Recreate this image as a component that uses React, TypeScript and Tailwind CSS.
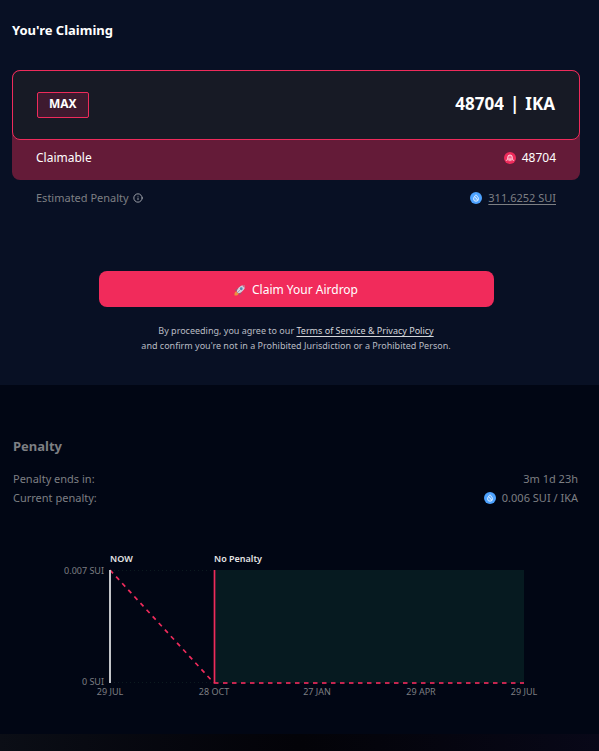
import { useState } from 'react'
import { Info } from 'lucide-react'

const CLAIMABLE = 48704

const TICKS = [
  { x: 110, label: '29 JUL' },
  { x: 214, label: '28 OCT' },
  { x: 317, label: '27 JAN' },
  { x: 421, label: '29 APR' },
  { x: 524, label: '29 JUL' },
]

function SuiIcon() {
  return (
    <svg viewBox="0 0 24 24" className="h-3 w-3 shrink-0" aria-hidden="true">
      <circle cx="12" cy="12" r="12" fill="#4da2ff" />
      <path
        d="M12 5.500c-2 2.500-5 5-5 8a5 5 0 0 0 10 0c0-3-3-5.500-5-8Z"
        fill="#6ab1ff"
        stroke="#e3f0ff"
        strokeWidth="1.800"
        strokeLinejoin="round"
      />
      <path
        d="M9.500 10c1 2.500 5 2.500 5.500 6"
        fill="none"
        stroke="#f4f9ff"
        strokeWidth="1.800"
        strokeLinecap="round"
      />
    </svg>
  )
}

function IkaIcon() {
  return (
    <svg viewBox="0 0 24 24" className="h-3 w-3 shrink-0" aria-hidden="true">
      <circle cx="12" cy="12" r="12" fill="#ee2b5b" />
      <path
        d="M4.500 16.500c2 .4 3-.6 3-2.500v-3.500a4.500 4.500 0 0 1 9 0V14c0 1.900 1 2.900 3 2.500"
        fill="#f4668a"
        stroke="#ffdde6"
        strokeWidth="2"
        strokeLinecap="round"
      />
      <path d="M10.300 13.500v4M13.700 13.500v4" stroke="#ffdde6" strokeWidth="1.800" strokeLinecap="round" />
    </svg>
  )
}

function RocketIcon() {
  return (
    <svg viewBox="0 0 24 24" className="h-3 w-3 shrink-0" aria-hidden="true">
      <path d="M1 23c-.4-4 .6-7 3.600-8.400l4.800 4.800C8 22.400 5 23.400 1 23Z" fill="#f0913a" />
      <path d="M9 8.600 4 9.400 1.600 14l5.400.6ZM15.400 15l-.8 5-4.600 2.400-.6-5.400Z" fill="#a8506f" />
      <path d="M22 2c-6.500-.4-11.600 2.400-16 10.400L5.600 15 9 18.400l2.600-.4C19.600 13.600 22.400 8.500 22 2Z" fill="#cfd3de" />
      <path d="M22 2c-2.200-.2-4.200.2-6 .8L21.200 8c.6-1.800 1-3.800.8-6Z" fill="#cf5f80" />
      <circle cx="14.500" cy="9.500" r="2.800" fill="#5b87b0" />
      <path d="m6 18 6-6" stroke="#8d93ab" strokeWidth="1.600" strokeLinecap="round" />
    </svg>
  )
}

function PenaltyChart() {
  return (
    <svg
      viewBox="0 0 599 178"
      className="mt-[25px] block w-full"
      role="img"
      aria-label="Penalty over time"
    >
      {/* Grid */}
      <path d="M110 38.500H524M110 150.500H524" stroke="#0c1a20" strokeWidth="1" strokeDasharray="1 3" />

      {/* Penalty free period */}
      <rect x="214" y="38" width="310" height="113" fill="#061a20" />

      <path d="M110 38 214 151" stroke="#ee2b5b" strokeWidth="1.700" strokeDasharray="4.500 4.500" />
      <path d="M214 151H524" stroke="#c4254f" strokeWidth="2" strokeDasharray="4.500 4.500" />
      <path d="M110 38V151" stroke="#c3c5c9" strokeWidth="2" />
      <path d="M214.500 38V151" stroke="#ee2b5b" strokeWidth="1.700" />

      <g fill="#e5e5e5" className="text-[9px] font-semibold">
        <text x="110" y="30">NOW</text>
        <text x="214" y="30">No Penalty</text>
      </g>
      <g fill="#7d7f83" className="text-[9px]">
        <text x="104" y="42" textAnchor="end">0.007 SUI</text>
        <text x="104" y="153" textAnchor="end">0 SUI</text>
        {TICKS.map((tick) => (
          <text key={tick.x} x={tick.x} y="163" textAnchor="middle">
            {tick.label}
          </text>
        ))}
      </g>
    </svg>
  )
}

export default function App() {
  const [amount, setAmount] = useState(String(CLAIMABLE))

  return (
    <main className="min-h-screen bg-linear-to-r from-[#0b0e16] via-[#030308] to-[#080818] font-['Noto_Sans',sans-serif] text-white">
      {/* Claim */}
      <section className="bg-[#081024] pt-5 pr-[19px] pb-8 pl-3">
        <h2 className="text-[13px] leading-5 font-bold">You're Claiming</h2>

        <div className="mt-[30px] rounded-lg bg-[#641b38]">
          <div className="flex h-[70px] items-center justify-between rounded-lg border border-[#ee2b5b] bg-[#171a25] px-6">
            <button
              type="button"
              onClick={() => setAmount(String(CLAIMABLE))}
              className="h-[26px] rounded-xs border border-[#ee2b5b] bg-[#3e1a2f] px-[11px] pb-0.5 text-xs leading-5 font-bold"
            >
              MAX
            </button>
            <label className="flex min-w-0 flex-1 items-center justify-end gap-1.5 pb-0.5 text-[17px] font-bold">
              <input
                type="text"
                inputMode="numeric"
                aria-label="Amount to claim"
                value={amount}
                onChange={(e) => setAmount(e.target.value)}
                className="w-full min-w-0 bg-transparent text-right outline-none"
              />
              <span>|</span>
              <span>IKA</span>
            </label>
          </div>
          <div className="flex h-10 items-center justify-between px-6 pb-1 text-xs">
            <span>Claimable</span>
            <span className="flex items-center gap-1.5">
              <IkaIcon />
              {CLAIMABLE}
            </span>
          </div>
        </div>

        <div className="mt-2 flex h-5 items-center justify-between px-6 text-[11px] text-[#7d7f83]">
          <span className="flex items-center gap-1">
            Estimated Penalty
            <Info size={10} className="text-[#b5b8be]" />
          </span>
          <span className="flex items-center gap-1.5">
            <SuiIcon />
            <a href="#penalty" className="underline underline-offset-2">
              311.6252 SUI
            </a>
          </span>
        </div>

        <div className="mt-[63px] flex flex-col items-center">
          <button
            type="button"
            className="flex h-9 w-full max-w-[395px] items-center justify-center gap-1.5 rounded-lg bg-[#f12b5b] pt-0.5 text-xs"
          >
            <RocketIcon />
            Claim Your Airdrop
          </button>
          <p className="mt-4 text-center text-[9px] leading-[15px] text-[#b9bcc3]">
            By proceeding, you agree to our{' '}
            <a href="#terms" className="text-[#d4d6da] underline underline-offset-2">
              Terms of Service &amp; Privacy Policy
            </a>
            <br />
            and confirm you're not in a Prohibited Jurisdiction or a Prohibited Person.
          </p>
        </div>
      </section>

      {/* Penalty */}
      <section id="penalty" className="bg-[#010614] pt-[49px] pb-6 text-[#7d7f83]">
        <div className="pr-[21px] pl-[13px]">
          <h2 className="text-[13px] leading-6 font-bold">Penalty</h2>
          <dl className="mt-[11px] text-[11px] leading-[19px]">
            <div className="flex justify-between">
              <dt>Penalty ends in:</dt>
              <dd>3m 1d 23h</dd>
            </div>
            <div className="flex justify-between">
              <dt>Current penalty:</dt>
              <dd className="flex items-center gap-1.5">
                <SuiIcon />
                0.006 SUI / IKA
              </dd>
            </div>
          </dl>
        </div>
        <PenaltyChart />
      </section>
    </main>
  )
}
